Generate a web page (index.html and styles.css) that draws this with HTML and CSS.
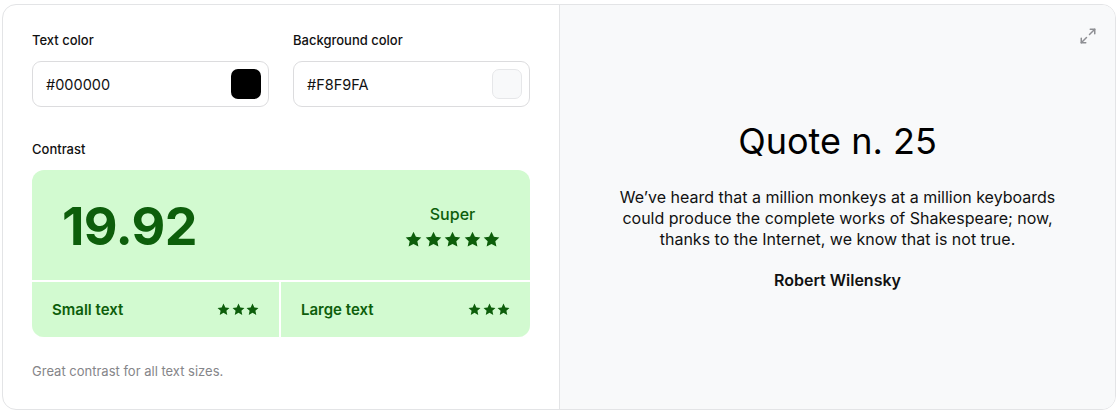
FILE: index.html
```html
<!DOCTYPE html>
<html>
<head>
<meta charset="utf-8">
<link rel="stylesheet" href="styles.css">
</head>
<body>
<div class="card">
  <div class="left">
    <div class="fields">
      <div class="field">
        <div class="label">Text color</div>
        <div class="input"><span>#000000</span><span class="swatch swatch-black"></span></div>
      </div>
      <div class="field">
        <div class="label">Background color</div>
        <div class="input"><span>#F8F9FA</span><span class="swatch swatch-light"></span></div>
      </div>
    </div>
    <div class="label contrast-label">Contrast</div>
    <div class="result">
      <div class="result-top">
        <div class="ratio">19.92</div>
        <div class="rating">
          <div class="rating-word">Super</div>
          <div class="stars big">
            <svg viewBox="0 0 24 24"><path d="M12 1l3.4 7.1 7.6.9-5.6 5.3 1.5 7.7L12 18.2 5.1 22l1.5-7.7L1 9l7.6-.9z"/></svg>
            <svg viewBox="0 0 24 24"><path d="M12 1l3.4 7.1 7.6.9-5.6 5.3 1.5 7.7L12 18.2 5.1 22l1.5-7.7L1 9l7.6-.9z"/></svg>
            <svg viewBox="0 0 24 24"><path d="M12 1l3.4 7.1 7.6.9-5.6 5.3 1.5 7.7L12 18.2 5.1 22l1.5-7.7L1 9l7.6-.9z"/></svg>
            <svg viewBox="0 0 24 24"><path d="M12 1l3.4 7.1 7.6.9-5.6 5.3 1.5 7.7L12 18.2 5.1 22l1.5-7.7L1 9l7.6-.9z"/></svg>
            <svg viewBox="0 0 24 24"><path d="M12 1l3.4 7.1 7.6.9-5.6 5.3 1.5 7.7L12 18.2 5.1 22l1.5-7.7L1 9l7.6-.9z"/></svg>
          </div>
        </div>
      </div>
      <div class="result-bottom">
        <div class="cell">
          <span>Small text</span>
          <div class="stars small">
            <svg viewBox="0 0 24 24"><path d="M12 1l3.4 7.1 7.6.9-5.6 5.3 1.5 7.7L12 18.2 5.1 22l1.5-7.7L1 9l7.6-.9z"/></svg>
            <svg viewBox="0 0 24 24"><path d="M12 1l3.4 7.1 7.6.9-5.6 5.3 1.5 7.7L12 18.2 5.1 22l1.5-7.7L1 9l7.6-.9z"/></svg>
            <svg viewBox="0 0 24 24"><path d="M12 1l3.4 7.1 7.6.9-5.6 5.3 1.5 7.7L12 18.2 5.1 22l1.5-7.7L1 9l7.6-.9z"/></svg>
          </div>
        </div>
        <div class="cell">
          <span>Large text</span>
          <div class="stars small">
            <svg viewBox="0 0 24 24"><path d="M12 1l3.4 7.1 7.6.9-5.6 5.3 1.5 7.7L12 18.2 5.1 22l1.5-7.7L1 9l7.6-.9z"/></svg>
            <svg viewBox="0 0 24 24"><path d="M12 1l3.4 7.1 7.6.9-5.6 5.3 1.5 7.7L12 18.2 5.1 22l1.5-7.7L1 9l7.6-.9z"/></svg>
            <svg viewBox="0 0 24 24"><path d="M12 1l3.4 7.1 7.6.9-5.6 5.3 1.5 7.7L12 18.2 5.1 22l1.5-7.7L1 9l7.6-.9z"/></svg>
          </div>
        </div>
      </div>
    </div>
    <div class="note">Great contrast for all text sizes.</div>
  </div>
  <div class="right">
    <svg class="expand" viewBox="0 0 24 24" fill="none" stroke="currentColor" stroke-width="2" stroke-linecap="round" stroke-linejoin="round"><polyline points="15 3 21 3 21 9"/><polyline points="9 21 3 21 3 15"/><line x1="21" y1="3" x2="14" y2="10"/><line x1="3" y1="21" x2="10" y2="14"/></svg>
    <div class="quote">
      <h1 class="title">Quote n. 25</h1>
      <p class="text">We’ve heard that a million monkeys at a million keyboards could produce the complete works of Shakespeare; now, thanks to the Internet, we know that is not true.</p>
      <p class="author">Robert Wilensky</p>
    </div>
  </div>
</div>
</body>
</html>
```
FILE: styles.css
```css
* { box-sizing: border-box; }
html, body { margin: 0; background: #fff; }
body {
  padding: 4px 2px 4px 2px;
  font-family: Inter, "Noto Sans", sans-serif;
  color: #111;
}
.card {
  display: flex;
  width: 1114px;
  height: 406px;
  border: 1px solid #e3e4e6;
  border-radius: 14px;
  overflow: hidden;
  background: #fff;
}
.left {
  width: 557px;
  flex: none;
  padding: 25px 28px 0 29px;
  border-right: 1px solid #e3e4e6;
}
.fields {
  display: grid;
  grid-template-columns: 237px 237px;
  column-gap: 24px;
}
.label {
  font-size: 13px;
  font-weight: 500;
  line-height: 20px;
  color: #111;
}
.input {
  margin-top: 11px;
  height: 46px;
  border: 1px solid #dcdcde;
  border-radius: 9px;
  display: flex;
  align-items: center;
  justify-content: space-between;
  padding: 0 7px 0 13px;
  font-size: 14.5px;
  color: #111;
}
.swatch {
  width: 30px;
  height: 30px;
  border-radius: 7px;
}
.swatch-black { background: #000; }
.swatch-light { background: #f8f9fa; border: 1px solid #e6e7e9; }
.contrast-label { margin-top: 32px; }
.result {
  margin-top: 11px;
  width: 498px;
  background: #d2fad0;
  border-radius: 12px;
  overflow: hidden;
  color: #0d5e0b;
}
.result-top {
  height: 112px;
  display: flex;
  align-items: center;
  justify-content: space-between;
  padding: 0 30px 0 30px;
  border-bottom: 2px solid #fff;
}
.ratio {
  font-size: 52px;
  font-weight: 700;
  letter-spacing: -0.6px;
  margin-top: 2px;
}
.rating {
  display: flex;
  flex-direction: column;
  align-items: center;
  margin-top: 2px;
}
.rating-word {
  font-size: 16px;
  font-weight: 500;
  line-height: 20px;
}
.stars { display: flex; }
.stars svg { fill: #0d5e0b; }
.stars.big { margin-top: 7px; gap: 2.5px; }
.stars.big svg { width: 17px; height: 17px; }
.stars.small { gap: 1.5px; }
.stars.small svg { width: 13px; height: 13px; }
.result-bottom {
  display: grid;
  grid-template-columns: 247px 249px;
  column-gap: 2px;
  background: #fff;
}
.cell {
  background: #d2fad0;
  height: 55px;
  display: flex;
  align-items: center;
  justify-content: space-between;
  padding: 0 20px;
  font-size: 15px;
  font-weight: 600;
}
.note {
  margin-top: 24px;
  font-size: 13px;
  line-height: 20px;
  color: #858589;
}
.right {
  flex: 1;
  position: relative;
  background: #f8f9fa;
  display: flex;
  align-items: center;
  justify-content: center;
  padding-bottom: 4px;
}
.expand {
  position: absolute;
  top: 22px;
  right: 18px;
  width: 18px;
  height: 18px;
  color: #8e8f93;
}
.quote {
  width: 450px;
  text-align: center;
}
.title {
  margin: 0;
  font-size: 36px;
  font-weight: 400;
  line-height: 44px;
  color: #000;
}
.text {
  margin: 24px 0 0;
  font-size: 16px;
  line-height: 21px;
  color: #111;
}
.author {
  margin: 20px 0 0;
  font-size: 16px;
  font-weight: 600;
  line-height: 21px;
  color: #111;
}
```
